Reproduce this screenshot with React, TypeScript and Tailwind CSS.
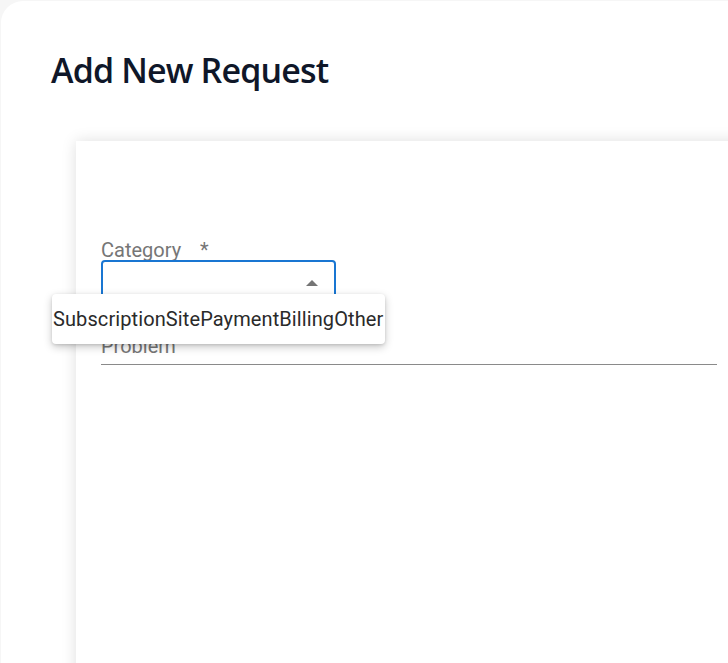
import React from "react";

const roboto = { fontFamily: "Roboto, 'Liberation Sans', sans-serif" };

export default function App() {
  return (
    <div className="relative h-[663px] w-[728px] overflow-hidden bg-[#f6f6f6]">
      <div className="ml-px mt-px h-[700px] w-[760px] rounded-tl-[22px] bg-white pl-[50px] pt-[46px]">
        <h1
          className="text-[34px] font-semibold leading-[46px] tracking-[-0.85px] text-[#0f1729]"
          style={{ fontFamily: "'Open Sans', 'Noto Sans', sans-serif" }}
        >
          Add New Request
        </h1>

        <div
          className="relative ml-[25px] mt-[48px] h-[560px] w-[700px] bg-white pl-[25px] pt-[98px] shadow-[0_0_14px_rgba(0,0,0,0.13)]"
          style={roboto}
        >
          <label className="block text-[20px] leading-[22px] text-[#767676]">
            Category <span className="ml-[14px]">*</span>
          </label>
          <div className="relative mt-[-1px] h-[56px] w-[235px] rounded-[4px] border-2 border-[#1976d2]">
            <span className="absolute right-[16px] top-[18px] h-0 w-0 border-x-[6px] border-b-[6px] border-x-transparent border-b-[#757575]" />
          </div>

          <div className="mt-[18px] w-[616px] border-b border-[#8a8a8a] pb-[6px]">
            <span className="block text-[20px] leading-[24px] text-[#767676]">Problem</span>
          </div>

          <div className="absolute left-[-24px] top-[153px] flex h-[50px] w-[333px] items-center rounded-[4px] bg-white pl-px shadow-[0_3px_8px_rgba(0,0,0,0.22),0_1px_3px_rgba(0,0,0,0.12)]">
            <span className="whitespace-nowrap text-[20px] leading-none tracking-[0.1px] text-[#2a2a2a]">
              SubscriptionSitePaymentBillingOther
            </span>
          </div>
        </div>
      </div>
    </div>
  );
}
